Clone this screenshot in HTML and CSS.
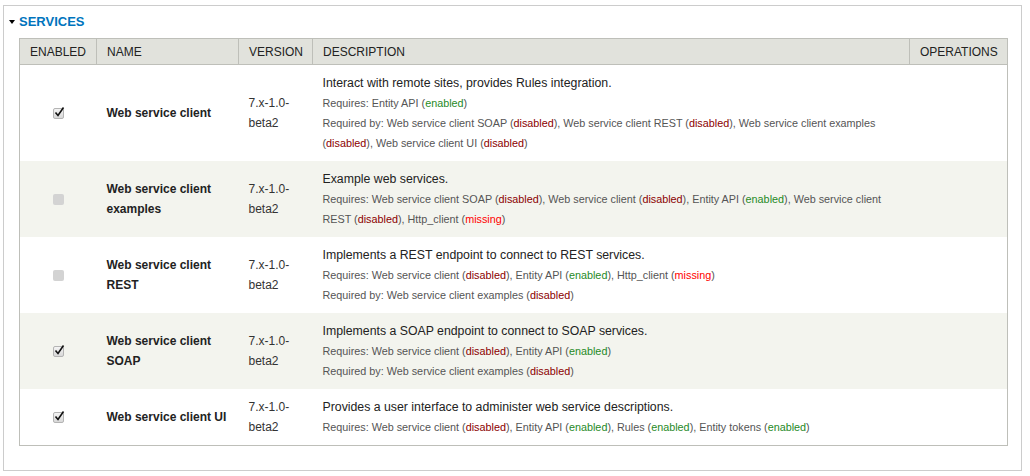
FILE: index.html
```html
<!DOCTYPE html>
<html>
<head>
<meta charset="utf-8">
<link rel="stylesheet" href="styles.css">
</head>
<body>
<div class="fieldset">
  <div class="legend"><span class="arrow"></span><span class="legend-text">Services</span></div>
  <table class="modules">
    <colgroup>
      <col class="c-enabled"><col class="c-name"><col class="c-version"><col class="c-desc"><col class="c-ops">
    </colgroup>
    <thead>
      <tr><th>Enabled</th><th>Name</th><th>Version</th><th>Description</th><th>Operations</th></tr>
    </thead>
    <tbody>
      <tr class="odd">
        <td class="cb"><span class="check on"><svg viewBox="0 0 13 13" width="13" height="13"><path d="M2.5 6.5 L5 9.5 L10.5 1.5" fill="none" stroke="#111" stroke-width="1.6"/></svg></span></td>
        <td class="name">Web service client</td>
        <td class="version">7.x-1.0-beta2</td>
        <td class="desc">
          <div class="text">Interact with remote sites, provides Rules integration.</div>
          <div class="req">Requires: Entity API (<span class="en">enabled</span>)</div>
          <div class="req">Required by: Web service client SOAP (<span class="dis">disabled</span>), Web service client REST (<span class="dis">disabled</span>), Web service client examples (<span class="dis">disabled</span>), Web service client UI (<span class="dis">disabled</span>)</div>
        </td>
        <td class="ops"></td>
      </tr>
      <tr class="even">
        <td class="cb"><span class="check off"></span></td>
        <td class="name">Web service client examples</td>
        <td class="version">7.x-1.0-beta2</td>
        <td class="desc">
          <div class="text">Example web services.</div>
          <div class="req">Requires: Web service client SOAP (<span class="dis">disabled</span>), Web service client (<span class="dis">disabled</span>), Entity API (<span class="en">enabled</span>), Web service client REST (<span class="dis">disabled</span>), Http_client (<span class="miss">missing</span>)</div>
        </td>
        <td class="ops"></td>
      </tr>
      <tr class="odd">
        <td class="cb"><span class="check off"></span></td>
        <td class="name">Web service client REST</td>
        <td class="version">7.x-1.0-beta2</td>
        <td class="desc">
          <div class="text">Implements a REST endpoint to connect to REST services.</div>
          <div class="req">Requires: Web service client (<span class="dis">disabled</span>), Entity API (<span class="en">enabled</span>), Http_client (<span class="miss">missing</span>)</div>
          <div class="req">Required by: Web service client examples (<span class="dis">disabled</span>)</div>
        </td>
        <td class="ops"></td>
      </tr>
      <tr class="even">
        <td class="cb"><span class="check on"><svg viewBox="0 0 13 13" width="13" height="13"><path d="M2.5 6.5 L5 9.5 L10.5 1.5" fill="none" stroke="#111" stroke-width="1.6"/></svg></span></td>
        <td class="name">Web service client SOAP</td>
        <td class="version">7.x-1.0-beta2</td>
        <td class="desc">
          <div class="text">Implements a SOAP endpoint to connect to SOAP services.</div>
          <div class="req">Requires: Web service client (<span class="dis">disabled</span>), Entity API (<span class="en">enabled</span>)</div>
          <div class="req">Required by: Web service client examples (<span class="dis">disabled</span>)</div>
        </td>
        <td class="ops"></td>
      </tr>
      <tr class="odd">
        <td class="cb"><span class="check on"><svg viewBox="0 0 13 13" width="13" height="13"><path d="M2.5 6.5 L5 9.5 L10.5 1.5" fill="none" stroke="#111" stroke-width="1.6"/></svg></span></td>
        <td class="name">Web service client UI</td>
        <td class="version">7.x-1.0-beta2</td>
        <td class="desc">
          <div class="text">Provides a user interface to administer web service descriptions.</div>
          <div class="req">Requires: Web service client (<span class="dis">disabled</span>), Entity API (<span class="en">enabled</span>), Rules (<span class="en">enabled</span>), Entity tokens (<span class="en">enabled</span>)</div>
        </td>
        <td class="ops"></td>
      </tr>
    </tbody>
  </table>
</div>
</body>
</html>
```

FILE: styles.css
```css
html, body {
  margin: 0;
  padding: 0;
  background: #fff;
}
body {
  font-family: "Liberation Sans", Arial, sans-serif;
  font-size: 12px;
  color: #333;
  padding: 5px 8px 0 3px;
}
.fieldset {
  border: 1px solid #ccc;
  box-sizing: border-box;
  height: 466px;
  padding: 0 13px 0 15px;
}
.legend {
  display: flex;
  align-items: center;
  height: 32px;
  box-sizing: border-box;
  padding-bottom: 2px;
  margin-left: -10px;
  gap: 4px;
}
.arrow {
  width: 0;
  height: 0;
  border-left: 3.5px solid transparent;
  border-right: 3.5px solid transparent;
  border-top: 4px solid #000;
  margin-top: 1px;
}
.legend-text {
  color: #0074bd;
  font-weight: bold;
  text-transform: uppercase;
  font-size: 13px;
}
.modules {
  width: 100%;
  border-collapse: collapse;
  table-layout: fixed;
  border: 1px solid #bebfb9;
}
.c-enabled { width: 77px; }
.c-name { width: 142px; }
.c-version { width: 74px; }
.c-ops { width: 98px; }
th {
  background: #e1e2dc;
  border: 1px solid #bebfb9;
  font-weight: normal;
  text-transform: uppercase;
  text-align: left;
  padding: 0 10px;
  height: 25px;
  color: #222;
  font-size: 12px;
}
td {
  padding: 8px 10px;
  line-height: 20px;
  vertical-align: middle;
}
tr.even td { background: #f3f4ee; }
td.cb { text-align: center; }
td.name {
  font-weight: bold;
  color: #222;
}
td.version { color: #333; }
td.desc { vertical-align: top; }
.text { color: #222; font-size: 12.3px; }
.req { font-size: 10.8px; color: #555; line-height: 20px; }
.en { color: #1f8a1f; }
.dis { color: #8b0000; }
.miss { color: #f00; }
.check {
  display: inline-block;
  width: 11px;
  height: 11px;
  box-sizing: border-box;
  border-radius: 2px;
  vertical-align: middle;
  position: relative;
}
.check.on {
  border: 1px solid #b4b4b4;
  background: linear-gradient(#f4f4f4, #d8d8d8);
}
.check.on svg {
  position: absolute;
  left: -1px;
  top: -3px;
}
.check.off {
  background: #d3d3d3;
}
```
